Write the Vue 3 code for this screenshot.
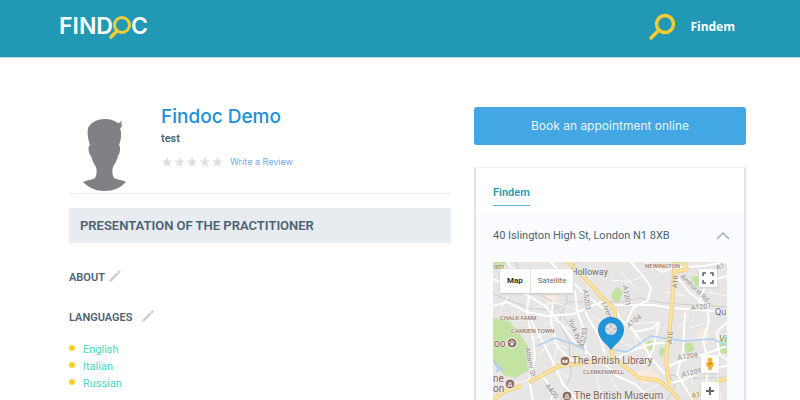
<script setup>
import { ref } from 'vue'

const languages = ['English', 'Italian', 'Russian']
const starOffsets = [0, 12.6, 25.2, 37.8, 50.4]
const mapType = ref('map')
const open = ref(true)

// main streets, white
const streets = [
  'M0 17 L20 26 L36 34 L52 44 L68 62 L80 78 L92 88 L104 99',
  'M14 0 L22 10 L30 22 L36 34 L34 50 L42 66 L50 80 L58 96 L70 122 L84 138',
  'M58 0 L70 14 L84 24 L94 34 L110 46',
  'M82 28 L84 48 L90 66 L93 92',
  'M94 34 L93 52 L106 74 L112 92',
  'M0 44 L14 40 L34 50 L54 54 L80 52 L108 40 L121 44',
  'M35 58 L40 76 L42 96 L36 118 L40 138',
  'M60 40 L58 60 L64 84 L78 98 L90 100',
  'M48 112 L60 128 L58 138',
  'M122 43 L160 43 L178 46 L234 50',
  'M138 0 L150 14 L158 26 L155 38 L140 46 L134 60 L150 82 L158 96 L172 112',
  'M121 44 L128 58 L142 70 L160 66 L166 60 L160 88 L150 104',
  'M120 98 L136 90 L158 82 L180 80',
  'M192 50 L190 90 L184 112 L200 138',
  'M176 104 L190 98 L212 92 L234 84',
  'M174 122 L190 118 L212 108 L234 104',
  'M182 12 L196 30 L214 44 L216 60 L210 78 L216 104 L210 138',
  'M234 14 L214 20 L206 40 L216 44',
  'M234 60 L224 70 L226 92 L234 98',
  'M110 100 L124 114 L142 122 L158 138',
  'M152 0 L170 10 L178 6 L210 4 L234 0'
]

// thin side streets
const lanes = [
  'M18 30 L8 46', 'M26 18 L46 8 L64 12', 'M44 14 L56 30 L74 32', 'M40 46 L60 40 L84 48',
  'M48 64 L62 58 L78 68', 'M46 92 L58 80 L74 86', 'M42 76 L56 70', 'M64 84 L60 104 L76 116',
  'M100 54 L112 62 L132 60', 'M98 8 L94 34', 'M128 10 L146 30', 'M118 18 L136 20 L150 14',
  'M142 70 L144 88', 'M136 62 L166 60', 'M128 80 L146 88', 'M172 30 L192 34', 'M196 66 L216 60',
  'M194 78 L210 78', 'M216 30 L234 34', 'M196 108 L200 122', 'M166 122 L150 130 L148 138',
  'M118 116 L130 138', 'M102 112 L110 138', 'M224 112 L228 138', 'M10 124 L36 118', 'M186 66 L196 52'
]

const greens = [
  'M0 56 L14 57 L24 68 L35 84 L36 108 L22 116 L11 113 L0 101 Z',
  'M0 0 L14 0 L10 5 L0 7 Z',
  'M124 25 L130 30 L126 40 L120 39 L118 32 Z',
  'M198 15 L208 14 L210 24 L202 25 Z',
  'M190 82 L199 80 L202 88 L194 91 Z',
  'M155 78 L162 80 L160 89 L152 86 Z',
  'M178 0 L188 0 L187 3 L180 2 Z',
  'M234 76 L225 84 L228 91 L234 92 Z',
  'M168 84 L172 88 L169 97 L166 90 Z'
]

const railways = [
  'M0 32 L36 46 L58 48 L78 40 L98 40 L130 40 L146 36 L170 41 L234 45',
  'M68 138 L78 112 L76 80 L66 60 L74 38 L72 14 L84 0',
  'M174 138 L182 124 L176 112 L192 117 L234 115',
  'M22 0 L36 26 L60 40 L84 74'
]

const yellowRoads = [
  'M75 0 L92 16 L106 32 L114 40 L122 48 L122 62 L118 84 L120 96 L134 106 L146 116 L164 118 L176 126 L186 138',
  'M36 120 L52 112 L66 104 L90 101 L120 97',
  'M182 0 L180 22 L179 46 L176 72 L173 98 L176 122',
  'M182 10 L194 7 L190 0',
  'M28 124 L10 130 L0 138',
  'M234 116 L216 124 L200 136'
]
</script>

<template>
  <div class="page">
    <header class="topbar">
      <a class="logo" href="#" aria-label="FINDOC">
        <span>FIND</span>
        <svg class="logo-o" viewBox="0 0 24 26" aria-hidden="true">
          <path d="M9 16 L3 22" stroke="#f6cd34" stroke-width="3.5" stroke-linecap="round" />
          <circle cx="14" cy="10" r="7.5" fill="none" stroke="#f6cd34" stroke-width="3" />
        </svg>
        <span>C</span>
      </a>
      <a class="search" href="#" aria-label="Search">
        <svg viewBox="0 0 28 28">
          <circle cx="17" cy="11" r="8.5" fill="none" stroke="#f8cb35" stroke-width="3.5" />
          <path d="M11 17 L3 25" stroke="#f8cb35" stroke-width="3.5" stroke-linecap="round" />
        </svg>
      </a>
      <a class="account" href="#">Findem</a>
    </header>

    <main class="content">
      <section class="practitioner">
        <div class="profile">
          <svg class="avatar" viewBox="0 0 72 72" role="img" aria-label="Profile picture">
            <path
              fill="#808185"
              d="M19 9 C22 3 29 0 36 0 C42 0 46 2 49 4 C51 4 52 3 52 1 C53 4 53 5 51 6 C53 5 53 5 53 5 C53 8 52 9 51 9 C53 14 52 21 50 26 C52 28 51 35 49 37 C48 41 46 45 44 48 C43 51 43 56 45 59 C49 61 54 61 57 63 C51 69 45 72 35 72 C27 72 20 69 14 63 C18 61 23 61 26 59 C28 56 28 51 27 48 C25 45 23 41 22 37 C20 35 18 28 21 26 C19 21 18 14 19 9 Z"
            />
          </svg>
          <div class="intro">
            <h1>Findoc Demo</h1>
            <p class="speciality">test</p>
            <div class="rating">
              <svg class="stars" viewBox="0 0 64 12" aria-hidden="true">
                <path
                  v-for="x in starOffsets"
                  :key="x"
                  :transform="`translate(${x} 0)`"
                  fill="#dddee0"
                  d="M6 0.5 L7.3 4.4 H11.5 L8.1 6.8 L9.4 10.9 L6 8.4 L2.6 10.9 L3.9 6.8 L0.5 4.4 H4.7 Z"
                />
              </svg>
              <a href="#">Write a Review</a>
            </div>
          </div>
        </div>

        <h2 class="banner">PRESENTATION OF THE PRACTITIONER</h2>

        <h3>
          ABOUT
          <button class="edit" aria-label="Edit about">
            <svg viewBox="0 0 14 14">
              <path fill="#cccccc" d="M0 14 L1 11 L9 3 L11 5 L3 13 Z M9.6 2.4 L11.2 0.8 Q12 0 12.8 0.8 L13.2 1.2 Q14 2 13.2 2.8 L11.6 4.4 Z" />
            </svg>
          </button>
        </h3>
        <h3>
          LANGUAGES
          <button class="edit wide" aria-label="Edit languages">
            <svg viewBox="0 0 14 14">
              <path fill="#cccccc" d="M0 14 L1 11 L9 3 L11 5 L3 13 Z M9.6 2.4 L11.2 0.8 Q12 0 12.8 0.8 L13.2 1.2 Q14 2 13.2 2.8 L11.6 4.4 Z" />
            </svg>
          </button>
        </h3>
        <ul class="languages">
          <li v-for="language in languages" :key="language">{{ language }}</li>
        </ul>
      </section>

      <aside class="booking">
        <button class="book">Book an appointment online</button>
        <div class="card">
          <div class="tabs">
            <a href="#" class="tab">Findem</a>
          </div>
          <div class="place">
            <button class="address" :aria-expanded="open" @click="open = !open">
              <span>40 Islington High St, London N1 8XB</span>
              <svg viewBox="0 0 14 8" aria-hidden="true">
                <path d="M1 7 L7 1 L13 7" fill="none" stroke="#a9adb1" stroke-width="1.5" />
              </svg>
            </button>
            <div v-if="open" class="map">
              <svg class="map-canvas" viewBox="0 0 234 138" preserveAspectRatio="xMidYMid slice">
                <rect width="234" height="138" fill="#e7e6e5" />
                <g fill="#c4e3a3">
                  <path v-for="d in greens" :key="d" :d="d" />
                </g>
                <g fill="#f8eadd">
                  <path d="M204 70 L216 64 L214 82 L204 78 Z" />
                  <path d="M142 110 L156 106 L168 116 L150 122 Z" />
                  <path d="M52 34 L62 32 L64 42 L54 44 Z" />
                </g>
                <g fill="none" stroke="#cdcdce">
                  <path v-for="d in railways" :key="d" :d="d" />
                </g>
                <g fill="none" stroke="#fafafa">
                  <path v-for="d in lanes" :key="d" :d="d" />
                </g>
                <g fill="none" stroke="#ffffff" stroke-width="2" stroke-linejoin="round">
                  <path v-for="d in streets" :key="d" :d="d" />
                </g>
                <g fill="none" stroke="#a9cff5">
                  <path d="M0 98 L5 105 L10 108 M4 110 L6 103" stroke-width="2" />
                  <path d="M44 84 L62 76 L80 82 L92 88 M122 88 L134 90 L146 82 L158 74 L190 79 L220 77 L234 84" stroke-width="1.5" />
                </g>
                <g fill="none" stroke="#f0cd78" stroke-width="4" stroke-linejoin="round">
                  <path v-for="d in yellowRoads" :key="d" :d="d" />
                </g>
                <g fill="none" stroke="#fbe3a1" stroke-width="2.5" stroke-linejoin="round">
                  <path v-for="d in yellowRoads" :key="d" :d="d" />
                </g>

                <g class="road-label">
                  <text transform="translate(90 28) rotate(82)">A5203</text>
                  <text transform="translate(109 41) rotate(68)">Liverp</text>
                  <text transform="translate(75 58) rotate(68)">York Way</text>
                  <text transform="translate(91 86) rotate(-80)">A5203</text>
                  <text transform="translate(32 86) rotate(78)">Albany St</text>
                  <text transform="translate(52 124) rotate(52)">A400</text>
                  <text transform="translate(130 24) rotate(82)">A1201</text>
                  <text transform="translate(136 66) rotate(-38)">A104</text>
                  <text transform="translate(187 15) rotate(44)">Amhurst Rd</text>
                  <text transform="translate(198 48) rotate(-5)">A1207</text>
                  <text transform="translate(185 98) rotate(-8)">A1208</text>
                  <text transform="translate(189 115) rotate(-12)">A1209</text>
                  <text transform="translate(224 8) rotate(-20)">A1</text>
                </g>
                <g class="road-label strong">
                  <text transform="translate(184 26) rotate(-87)">A10</text>
                  <text transform="translate(179 82) rotate(-85)">A10</text>
                  <text transform="translate(199 136) rotate(-10)">A11</text>
                </g>
                <g class="area-label">
                  <text x="7" y="58">CHALK FARM</text>
                  <text x="18" y="71">CAMDEN TOWN</text>
                  <text x="90" y="112">CLERKENWELL</text>
                  <text x="152" y="6">NEWINGTON</text>
                </g>
                <g class="place-label">
                  <text class="town" x="78" y="13">Holloway</text>
                  <text class="town" x="222" y="53">Qu</text>
                  <text x="1" y="85">oo</text>
                  <text x="0" y="120">ne</text>
                  <text x="0" y="130">on</text>
                  <text x="79" y="102">The British Library</text>
                  <text x="81" y="137">The British Museum</text>
                  <text class="park" x="226" y="80">Vi</text>
                </g>
                <text class="corner" x="1" y="7">ath</text>

                <g fill="#8d6e63" stroke="#ffffff">
                  <circle cx="19" cy="81" r="5" />
                  <circle cx="17" cy="122" r="5" />
                  <circle cx="72" cy="99" r="5" />
                  <circle cx="74" cy="134" r="5" />
                </g>
                <g fill="#ffffff">
                  <circle cx="19" cy="82" r="1.5" />
                  <circle cx="17" cy="80" r="0.8" />
                  <circle cx="19" cy="79" r="0.8" />
                  <circle cx="21" cy="80" r="0.8" />
                  <path d="M14.5 121.5 L17 120 L19.5 121.5 Z M14.5 123.5 H19.5 V124.5 H14.5 Z M15.5 122 H16.3 V124 H15.5 Z M17.7 122 H18.5 V124 H17.7 Z" />
                  <path d="M69.5 97.5 L71.6 98.3 V101.3 L69.5 100.5 Z M74.5 97.5 L72.4 98.3 V101.3 L74.5 100.5 Z" />
                  <path d="M71.5 133.5 L74 132 L76.5 133.5 Z M71.5 135.5 H76.5 V136.5 H71.5 Z M72.5 134 H73.3 V136 H72.5 Z M74.7 134 H75.5 V136 H74.7 Z" />
                </g>

                <path fill="#1f95d8" d="M118 88 C114 82 105 77 105 68 C105 60 111 55 118 55 C125 55 131 60 131 68 C131 77 122 82 118 88 Z" />
                <circle cx="118" cy="67" r="6" fill="#dedfe0" />
                <path d="M118 61 V66 M118 69 V73 M112 67 H116 M120 67 H124" stroke="#a9b5bd" />
              </svg>

              <div class="map-type">
                <button :class="{ active: mapType === 'map' }" @click="mapType = 'map'">Map</button>
                <button :class="{ active: mapType === 'satellite' }" @click="mapType = 'satellite'">Satellite</button>
              </div>
              <button class="map-button fullscreen" aria-label="Toggle fullscreen">
                <svg viewBox="0 0 12 12">
                  <path d="M1 4 V1 H4 M8 1 H11 V4 M11 8 V11 H8 M4 11 H1 V8" fill="none" stroke="#666666" stroke-width="1.6" />
                </svg>
              </button>
              <div class="map-tools">
                <button class="map-button" aria-label="Street view">
                  <svg viewBox="0 0 12 14">
                    <circle cx="6" cy="3" r="2.5" fill="#f3b32c" />
                    <path d="M2 6 Q6 4 10 6 L9 10 H8 L7.5 13 H4.5 L4 10 H3 Z" fill="#f3ae28" />
                    <path d="M4 6 L6 7 L8 6" fill="none" stroke="#c98117" />
                  </svg>
                </button>
                <button class="map-button" aria-label="Zoom in">
                  <svg viewBox="0 0 12 12">
                    <path d="M6 2 V10 M2 6 H10" stroke="#666666" stroke-width="2" />
                  </svg>
                </button>
              </div>
            </div>
          </div>
        </div>
      </aside>
    </main>
  </div>
</template>

<style>
body {
  margin: 0;
  background: #ffffff;
}
</style>

<style scoped>
.page {
  font-family: Roboto, 'Liberation Sans', sans-serif;
  font-size: 11px;
  color: #4b6373;
}
button {
  padding: 0;
  border: 0;
  background: none;
  font: inherit;
  color: inherit;
  cursor: pointer;
}
a {
  text-decoration: none;
}
h1,
h2,
h3,
p,
ul {
  margin: 0;
  padding: 0;
}
svg {
  display: block;
}

.topbar {
  display: flex;
  align-items: center;
  height: 57px;
  padding: 0 65px 4px 59px;
  box-sizing: border-box;
  background: #2199b4;
  box-shadow: 0 1px 0 #b5dbe5;
}
.logo {
  display: flex;
  align-items: center;
  margin-right: auto;
  padding-bottom: 2px;
  font: 600 23px/28px Inter, sans-serif;
  color: #ffffff;
}
.logo-o {
  width: 24px;
  height: 26px;
  margin: 4px -1px 0 -5px;
}
.search svg {
  width: 28px;
  height: 28px;
}
.account {
  margin-left: 14px;
  font: 700 12px/16px 'Open Sans', sans-serif;
  color: #ffffff;
}

.content {
  display: grid;
  grid-template-columns: minmax(0, 382fr) minmax(0, 272fr);
  gap: 23px;
  padding: 50px 54px 0 69px;
}
.profile {
  display: flex;
  gap: 20px;
  height: 86px;
  border-bottom: 1px solid #e6f0f2;
}
.avatar {
  flex: none;
  width: 72px;
  height: 72px;
  margin-top: 12px;
}
h1 {
  font: 500 19px/20px Inter, sans-serif;
  color: #1e90d8;
}
.speciality {
  margin-top: 5px;
  line-height: 14px;
  font-weight: 600;
}
.rating {
  display: flex;
  align-items: center;
  gap: 5px;
  margin-top: 9px;
  line-height: 14px;
}
.stars {
  width: 64px;
  height: 12px;
}
.rating a {
  font-family: Inter, sans-serif;
  font-size: 9px;
  color: #73aaec;
}
.banner {
  margin: 14px 0 25px;
  padding: 0 11px;
  background: #e8ebef;
  font-size: 13px;
  line-height: 35px;
  font-weight: 600;
}
h3 {
  display: flex;
  align-items: center;
  gap: 4px;
  margin-bottom: 20px;
  font-size: 11px;
  line-height: 20px;
  font-weight: 600;
}
.edit {
  margin-bottom: 5px;
}
.edit.wide {
  margin-left: 6px;
}
.edit svg {
  width: 12px;
  height: 12px;
}
.languages {
  margin-top: -7px;
  list-style: none;
}
.languages li {
  display: flex;
  align-items: center;
  gap: 8px;
  line-height: 17px;
  color: #48d9bb;
}
.languages li::before {
  content: '';
  width: 6px;
  height: 6px;
  margin-bottom: 3px;
  border-radius: 50%;
  background: #fbd02d;
}

.book {
  display: block;
  width: 100%;
  border-radius: 3px;
  background: #42a7e2;
  color: #e8f5fc;
  font: 400 12px/38px Inter, sans-serif;
}
.card {
  margin-top: 22px;
  border: solid #e0e4ea;
  border-width: 1px 2px 0;
  border-top-color: #f0f2f4;
}
.tabs {
  display: flex;
  padding: 14px 17px 4px;
}
.tab {
  padding-bottom: 1px;
  border-bottom: 1px solid #55b2c7;
  line-height: 22px;
  font-weight: 600;
  color: #2a9bb5;
}
.place {
  padding: 14px 17px 0;
  background: #fafcff;
}
.address {
  display: flex;
  justify-content: space-between;
  align-items: center;
  width: 100%;
  padding-bottom: 14px;
  line-height: 24px;
  text-align: left;
}
.address svg {
  width: 14px;
  height: 8px;
  margin-right: -3px;
}

.map {
  position: relative;
  height: 138px;
  overflow: hidden;
}
.map-canvas {
  width: 100%;
  height: 100%;
}
.map-canvas text {
  font-family: Roboto, sans-serif;
  paint-order: stroke;
  stroke: #f3f2f1;
  stroke-width: 1px;
}
.road-label {
  font-size: 7px;
  fill: #8a8784;
}
.road-label.strong {
  fill: #8f7440;
}
.area-label {
  font-size: 6px;
  font-weight: 500;
  fill: #98796b;
}
.place-label {
  font-size: 10px;
  fill: #7f6358;
}
.town {
  font-size: 9px;
  fill: #666666;
}
.park {
  font-size: 9px;
  font-style: italic;
  fill: #4a9a4f;
}
.corner {
  font-size: 7px;
  fill: #5c9458;
}
.map-type {
  position: absolute;
  top: 7px;
  left: 7px;
  display: flex;
  background: #ffffff;
  box-shadow: 0 1px 2px #c4c4c4;
}
.map-type button {
  padding: 0 7px;
  font-size: 8px;
  line-height: 24px;
  color: #666666;
}
.map-type button + button {
  border-left: 1px solid #e2e2e2;
}
.map-type .active {
  font-weight: 600;
  color: #222222;
}
.map-button {
  display: grid;
  place-items: center;
  width: 18px;
  height: 18px;
  background: #ffffff;
  box-shadow: 0 1px 2px #cccccc;
}
.map-button svg {
  width: 12px;
  height: 14px;
}
.fullscreen {
  position: absolute;
  top: 7px;
  right: 10px;
}
.map-tools {
  position: absolute;
  top: 93px;
  right: 8px;
  display: grid;
  gap: 9px;
}
</style>
